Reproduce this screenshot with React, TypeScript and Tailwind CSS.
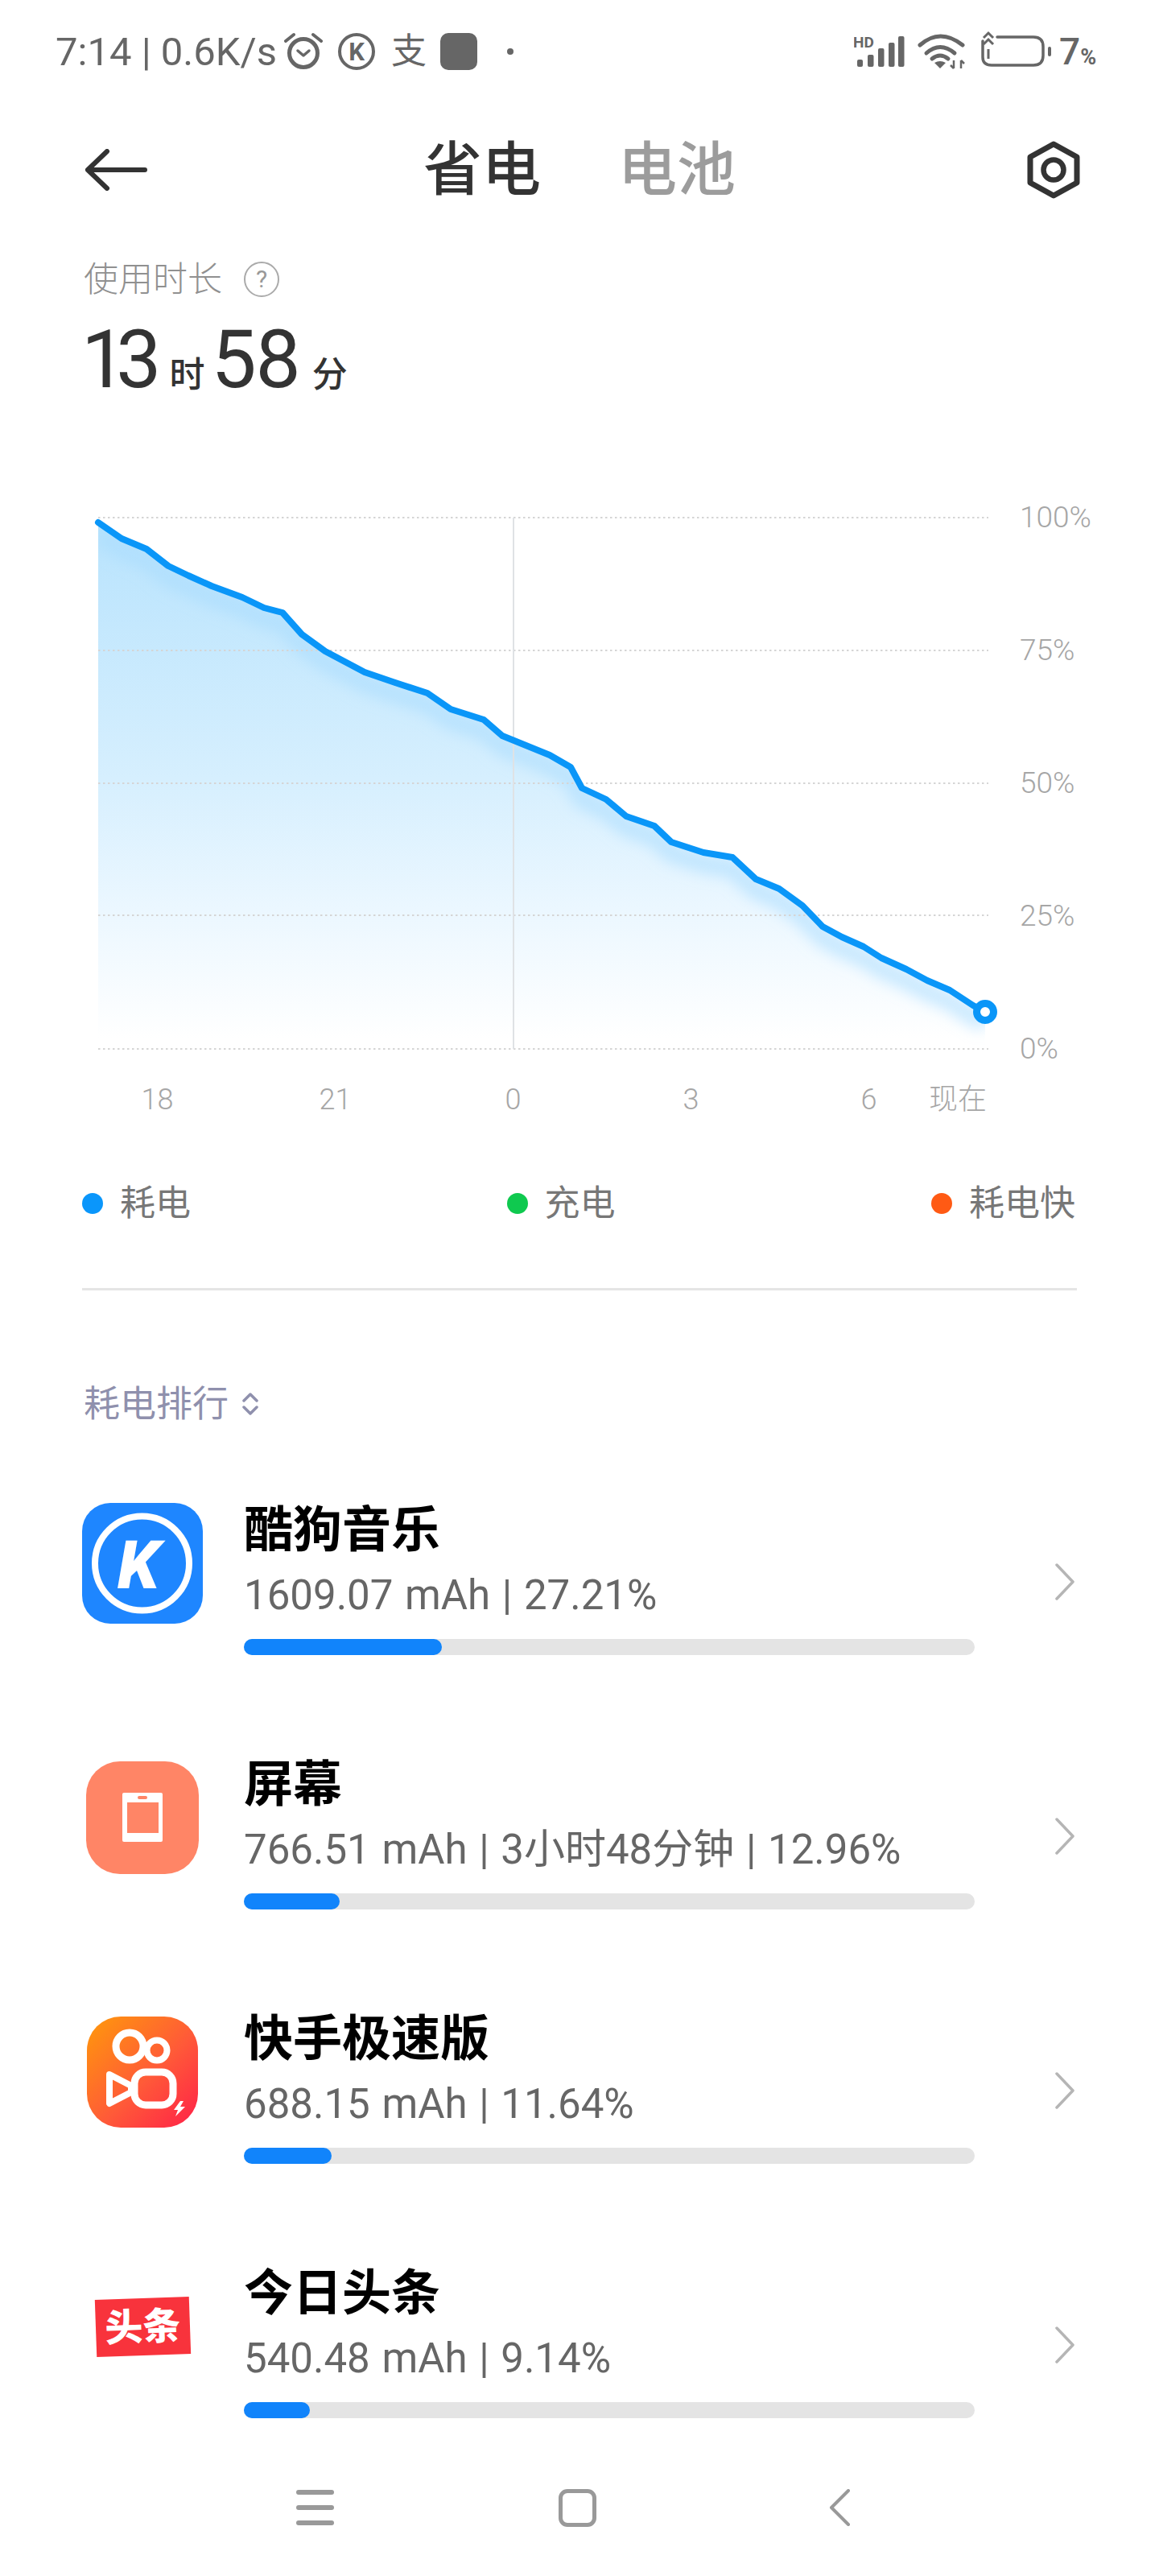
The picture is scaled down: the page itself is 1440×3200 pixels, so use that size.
const LINE =
  '122,649 151,669 182,682 209,703 234,715 263,728 301,742 328,755 351,761 375,788 404,809 453,835 491,848 531,861 560,881 601,894 624,914 683,938 709,953 723,979 753,993 778,1014 813,1026 834,1046 874,1059 910,1065 939,1092 968,1104 997,1125 1022,1151 1046,1164 1073,1176 1095,1190 1126,1204 1152,1218 1180,1230 1209,1249 1224,1257'

const GRID_Y = [643, 808, 973, 1137, 1303]
const PERCENTS = ['100%', '75%', '50%', '25%', '0%']
const HOURS = ['18', '21', '0', '3', '6']

const APPS = [
  { name: '酷狗音乐', usage: '1609.07 mAh | 27.21%', bar: 246, icon: <KugouIcon /> },
  { name: '屏幕', usage: '766.51 mAh | 3小时48分钟 | 12.96%', bar: 119, icon: <ScreenIcon /> },
  { name: '快手极速版', usage: '688.15 mAh | 11.64%', bar: 109, icon: <KuaishouIcon /> },
  { name: '今日头条', usage: '540.48 mAh | 9.14%', bar: 82, icon: <ToutiaoIcon /> },
]

function KugouIcon() {
  return (
    <svg width="150" height="150" viewBox="0 0 150 150">
      <rect width="150" height="150" rx="35" fill="#1e86ff" />
      <circle cx="74.5" cy="75" r="58.5" fill="none" stroke="#fff" strokeWidth="8" />
      <text x="44" y="106" fontFamily="Roboto" fontWeight="900" fontStyle="italic" fontSize="84" fill="#fff">K</text>
    </svg>
  )
}

function ScreenIcon() {
  return (
    <svg width="140" height="140" viewBox="0 0 140 140">
      <rect width="140" height="140" rx="42" fill="#ff8566" />
      <rect x="45" y="39" width="50" height="61" rx="2" fill="#fff" />
      <rect x="51" y="51" width="39" height="38" fill="#ff8566" />
      <rect x="64" y="43" width="12" height="4" rx="2" fill="#ff8566" />
    </svg>
  )
}

function KuaishouIcon() {
  return (
    <svg width="138" height="138" viewBox="0 0 138 138">
      <defs>
        <linearGradient id="ks" x1="0" y1="0" x2="1" y2="1">
          <stop offset="0" stopColor="#ff9a0a" />
          <stop offset="0.55" stopColor="#ff5a38" />
          <stop offset="1" stopColor="#ff2048" />
        </linearGradient>
      </defs>
      <rect width="138" height="138" rx="42" fill="url(#ks)" />
      <g fill="none" stroke="#fff" strokeLinejoin="round">
        <circle cx="53" cy="37" r="17" strokeWidth="9" />
        <circle cx="87" cy="42" r="12.5" strokeWidth="8" />
        <rect x="59" y="69" width="48" height="41" rx="14" strokeWidth="9" />
        <path d="M28 72 L55 86 V94 L28 108 Z" strokeWidth="8" />
      </g>
      <path d="M116 105 L108 116 H113 L110 124 L122 112 H116 L120 105 Z" fill="#fff" />
    </svg>
  )
}

function ToutiaoIcon() {
  return (
    <div className="w-[117px] h-[71px] -rotate-2 bg-[#f8333c] flex items-center justify-center text-white text-[47px] font-black leading-none">
      头条
    </div>
  )
}

function StatusBar() {
  return (
    <div className="h-[128px] shrink-0 flex items-center pl-[69px] text-[#666]">
      <div className="w-[284px] text-[49px] whitespace-nowrap leading-none">7:14 | 0.6K/s</div>
      <svg width="133" height="54" viewBox="353 36 133 54">
        <g fill="none" stroke="#666" strokeLinecap="round" strokeLinejoin="round">
          <circle cx="377" cy="65" r="17.5" strokeWidth="5" />
          <path d="M370 62 L377 68 L384 62" strokeWidth="3.5" />
          <path d="M355 50 L365 42 M399 50 L389 42" strokeWidth="4" />
          <circle cx="443" cy="63" r="21" strokeWidth="4" />
        </g>
        <text x="443" y="74" textAnchor="middle" fontFamily="Roboto" fontWeight="700" fontSize="31" fill="#666">K</text>
      </svg>
      <span className="w-[61px] text-[44px] leading-none">支</span>
      <svg width="96" height="54" viewBox="547 36 96 54">
        <rect x="547" y="40" width="46" height="46" rx="10" fill="#666" />
        <circle cx="634" cy="63" r="4" fill="#666" />
      </svg>
      <svg className="ml-[418px]" width="246" height="54" viewBox="1061 36 246 54">
        <text x="1060" y="58" fontFamily="Roboto" fontWeight="700" fontSize="19" fill="#666">HD</text>
        <g fill="#666">
          <rect x="1065" y="73" width="7" height="9" rx="2" />
          <rect x="1078" y="67" width="7.5" height="15" rx="2" />
          <rect x="1091" y="59" width="7.5" height="23" rx="2" />
          <rect x="1104" y="52" width="7.5" height="30" rx="2" />
          <rect x="1116" y="44" width="7.5" height="38" rx="2" />
          <path d="M1161 77 Q1168 73 1175 77 L1168 84 Z" />
        </g>
        <g fill="none" stroke="#666" strokeWidth="5" strokeLinecap="round">
          <path d="M1143 55 Q1168 33 1196 55" />
          <path d="M1151 65 Q1168 50 1186 65" />
          <path d="M1158 72 Q1168 64 1178 72" />
        </g>
        <path d="M1185 74 V84 M1181 80 L1185 84 M1194 84 V74 M1194 74 L1198 78" fill="none" stroke="#666" strokeWidth="2.5" />
        <path
          d="M1239 45 H1284 Q1296 45 1296 57 V68 Q1296 80 1284 80 H1232 Q1221 80 1221 70 V50"
          fill="none"
          stroke="#666"
          strokeWidth="3.5"
          strokeLinecap="round"
        />
        <rect x="1302" y="57" width="4" height="12" rx="2" fill="#666" />
        <path d="M1222 46 L1228 40 L1234 46 M1222 54 L1228 48 L1234 54 M1228 60 V72" fill="none" stroke="#666" strokeWidth="3" />
      </svg>
      <div className="ml-[9px] flex items-baseline font-medium leading-none">
        <span className="text-[46px]">7</span>
        <span className="text-[27px] font-bold">%</span>
      </div>
    </div>
  )
}

function Header() {
  return (
    <div className="h-[166px] shrink-0 px-[100px] grid grid-cols-[1fr_auto_1fr] items-center">
      <svg className="ml-[5px]" width="78" height="52" viewBox="0 0 78 52" fill="none" stroke="#333" strokeWidth="6" strokeLinecap="round" strokeLinejoin="round">
        <path d="M75 26 H4 M28 3 L4 26 L28 49" />
      </svg>
      <div className="flex gap-[96px] text-[73px] leading-none font-medium">
        <span className="text-[#333]">省电</span>
        <span className="text-[#9c9c9c]">电池</span>
      </div>
      <svg className="justify-self-end -mr-[2px]" width="66" height="72" viewBox="0 0 66 72" fill="none" stroke="#333" strokeLinejoin="round">
        <path d="M33 4 L62 20 V52 L33 68 L4 52 V20 Z" strokeWidth="7" />
        <circle cx="33" cy="36" r="12.5" strokeWidth="6.5" />
      </svg>
    </div>
  )
}

function Summary() {
  return (
    <div className="h-[336px] shrink-0 pl-[104px] pt-[31px] text-[#333]">
      <div className="flex items-center gap-[27px] h-[44px]">
        <span className="text-[43px] leading-none text-[#909090] font-light">使用时长</span>
        <span className="w-[44px] h-[44px] rounded-full border-[2.5px] border-[#aaa] flex items-center justify-center text-[30px] leading-none text-[#999]">?</span>
      </div>
      <div className="mt-[28px] flex items-baseline leading-none">
        <span className="text-[100px] tracking-[-13px] -ml-[3px]">13</span>
        <span className="text-[44px] ml-[23px] mr-[8px] font-medium">时</span>
        <span className="text-[100px] tracking-[-1px]">58</span>
        <span className="text-[44px] ml-[15px] font-medium">分</span>
      </div>
    </div>
  )
}

function BatteryChart() {
  return (
    <div className="shrink-0">
      <div className="flex items-start pl-[110px]">
        <svg width="1130" height="690" viewBox="110 630 1130 690">
          <defs>
            <linearGradient id="area" gradientUnits="userSpaceOnUse" x1="0" y1="645" x2="0" y2="1290">
              <stop offset="0" stopColor="#b8e3fd" />
              <stop offset="0.5" stopColor="#d6effe" />
              <stop offset="0.75" stopColor="#ebf7ff" />
              <stop offset="1" stopColor="#ffffff" />
            </linearGradient>
            <clipPath id="under">
              <polygon points={`${LINE} 1224,1303 122,1303`} />
            </clipPath>
            <filter id="soft" x="-5%" y="-5%" width="110%" height="110%">
              <feGaussianBlur stdDeviation="9" />
            </filter>
          </defs>
          <polygon points={`${LINE} 1224,1303 122,1303`} fill="url(#area)" />
          <g clipPath="url(#under)">
            <polyline points={LINE} transform="translate(0 14)" fill="none" stroke="#a9dcfd" strokeOpacity="0.6" strokeWidth="22" filter="url(#soft)" />
          </g>
          {GRID_Y.map((y) => (
            <line key={y} x1="122" x2="1228" y1={y} y2={y} stroke="#d5d5d5" strokeWidth="2" strokeDasharray="2.5 3.5" />
          ))}
          <line x1="638" x2="638" y1="643" y2="1303" stroke="#dfe2e5" strokeWidth="2" />
          <polyline points={LINE} fill="none" stroke="#0a96f8" strokeWidth="8" strokeLinecap="round" strokeLinejoin="round" />
          <circle cx="1224" cy="1257" r="10.5" fill="#fff" stroke="#0a96f8" strokeWidth="9" />
        </svg>
        <div className="ml-[27px] -mt-[7px] h-[700px] flex flex-col justify-between text-[37px] leading-[40px] font-light text-[#a6a6a6]">
          {PERCENTS.map((p) => (
            <span key={p}>{p}</span>
          ))}
        </div>
      </div>
      <div className="mt-[23px] flex pl-[85px] text-[36px] leading-[40px] font-light text-[#a6a6a6]">
        {HOURS.map((h) => (
          <span key={h} className="w-[221px] text-center">{h}</span>
        ))}
        <span className="w-[76px] -ml-[38px] text-center whitespace-nowrap">现在</span>
      </div>
    </div>
  )
}

function Legend() {
  const items = [
    { label: '耗电', color: 'bg-[#0a96fb]' },
    { label: '充电', color: 'bg-[#0fc94f]' },
    { label: '耗电快', color: 'bg-[#ff5a14]' },
  ]
  return (
    <div className="mt-[89px] shrink-0 pl-[102px] pr-[104px] flex justify-between text-[44px] leading-[40px] text-[#777]">
      {items.map((item) => (
        <div key={item.label} className="flex items-center gap-[21px]">
          <span className={`w-[26px] h-[26px] rounded-full ${item.color}`} />
          <span>{item.label}</span>
        </div>
      ))}
    </div>
  )
}

function AppRow({ app }: { app: (typeof APPS)[number] }) {
  return (
    <div className="flex items-start">
      <div className="w-[150px] h-[150px] shrink-0 flex items-center justify-center">{app.icon}</div>
      <div className="ml-[51px] w-[908px]">
        <div className="h-[68px] text-[61px] leading-[68px] font-bold text-black">{app.name}</div>
        <div className="mt-[17px] h-[60px] text-[51px] leading-[60px] [word-spacing:2px] text-[#666] whitespace-nowrap">{app.usage}</div>
        <div className="mt-[24px] h-[20px] rounded-full bg-[#e4e4e4]">
          <div className="h-full rounded-full bg-[#1184fb]" style={{ width: app.bar }} />
        </div>
      </div>
      <svg className="ml-[100px] mt-[75px]" width="24" height="46" viewBox="0 0 24 46" fill="none" stroke="#b5b5b5" strokeWidth="3.5" strokeLinecap="round" strokeLinejoin="round">
        <path d="M2 2 L22 23 L2 44" />
      </svg>
    </div>
  )
}

function NavBar() {
  return (
    <div className="mt-auto h-[170px] shrink-0 pr-[6px] grid grid-cols-[repeat(3,326px)] justify-center items-center justify-items-center">
      <svg width="47" height="44" viewBox="0 0 47 44" fill="#999">
        <rect y="0" width="47" height="6" rx="3" />
        <rect y="19" width="47" height="6" rx="3" />
        <rect y="38" width="47" height="6" rx="3" />
      </svg>
      <div className="w-[47px] h-[47px] rounded-[11px] border-[5px] border-[#999]" />
      <svg width="26" height="46" viewBox="0 0 26 46" fill="none" stroke="#999" strokeWidth="4" strokeLinecap="round" strokeLinejoin="round">
        <path d="M24 2 L3 23 L24 44" />
      </svg>
    </div>
  )
}

export default function App() {
  return (
    <div className="w-[1440px] h-[3200px] bg-white flex flex-col overflow-hidden [font-family:Roboto,'Noto_Sans_CJK_SC',sans-serif]">
      <StatusBar />
      <Header />
      <Summary />
      <BatteryChart />
      <Legend />
      <div className="mt-[85px] mx-[102px] h-[3px] shrink-0 bg-[#e5e5e5]" />
      <div className="mt-[119px] pl-[104px] shrink-0 flex items-center gap-[17px] h-[44px] text-[45px] leading-none text-[#8f90ad]">
        <span>耗电排行</span>
        <svg width="20" height="28" viewBox="0 0 20 28" fill="none" stroke="#8f90ad" strokeWidth="3.5" strokeLinecap="round" strokeLinejoin="round">
          <path d="M2 10 L10 2 L18 10 M2 18 L10 26 L18 18" />
        </svg>
      </div>
      <div className="mt-[101px] pl-[102px] flex flex-col gap-[127px]">
        {APPS.map((app) => (
          <AppRow key={app.name} app={app} />
        ))}
      </div>
      <NavBar />
    </div>
  )
}
